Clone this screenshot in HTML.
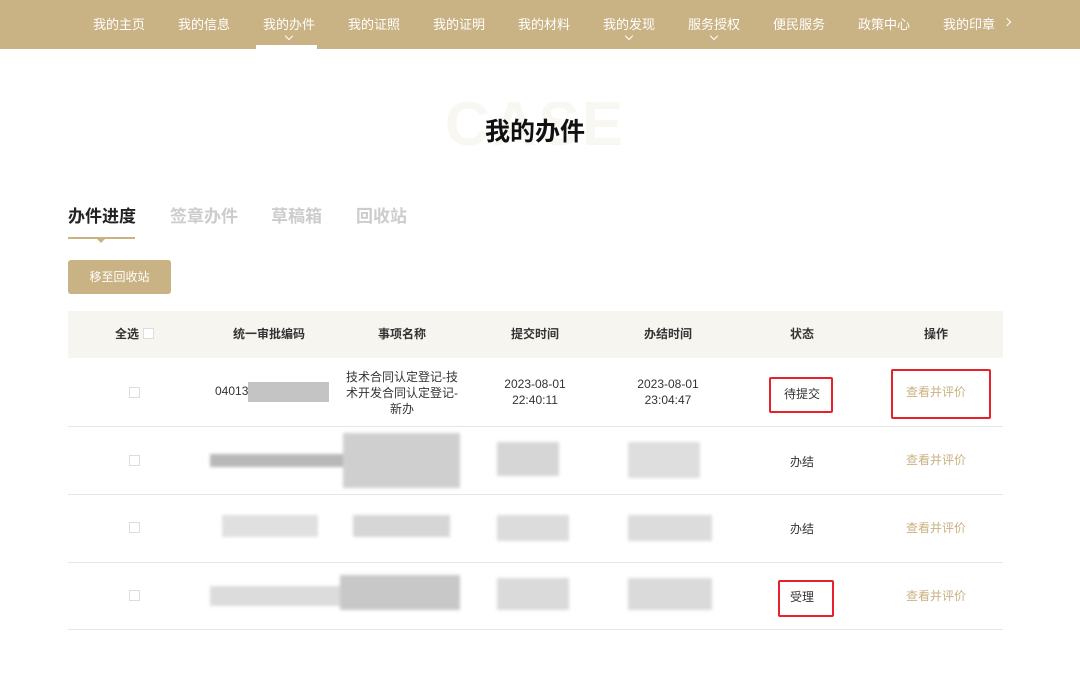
<!DOCTYPE html>
<html><head><meta charset="utf-8"><style>
*{margin:0;padding:0;box-sizing:border-box}
body{width:1080px;height:673px;background:#fff;font-family:"Liberation Sans","Noto Sans CJK SC",sans-serif;position:relative;overflow:hidden;color:#333}
.nav{position:absolute;left:0;top:0;width:1080px;height:49px;background:#c9b283}
.nav span{position:absolute;top:14px;font-size:13px;color:#fff;transform:translateX(-50%);white-space:nowrap}
.chev{position:absolute;width:6px;height:6px;border-right:1px solid #fff;border-bottom:1px solid #fff;transform:rotate(45deg)}
.a{position:absolute}
.c{position:absolute;transform:translateX(-50%);text-align:center;white-space:nowrap}
.line{position:absolute;left:68px;width:935px;height:1px;background:#e6e6e6}
.cb{position:absolute;width:11px;height:11px;border:1px solid #ddd;background:#fff}
.blur{position:absolute;background:#c8c8c8;filter:blur(1.5px)}
.op{color:#c9b283;font-size:12px}
.red{position:absolute;border:2px solid #e5212b;border-radius:2px}
</style></head><body>
<div class="nav">
<span style="left:119px">我的主页</span><span style="left:204px">我的信息</span><span style="left:289px">我的办件</span><span style="left:374px">我的证照</span><span style="left:459px">我的证明</span><span style="left:544px">我的材料</span><span style="left:629px">我的发现</span><span style="left:714px">服务授权</span><span style="left:799px">便民服务</span><span style="left:884px">政策中心</span><span style="left:969px">我的印章</span>
<div class="chev" style="left:286px;top:33px"></div><div class="chev" style="left:626px;top:33px"></div><div class="chev" style="left:711px;top:33px"></div>
<div class="chev" style="left:1004px;top:19px;transform:rotate(-45deg)"></div>
<div class="a" style="left:256px;top:45px;width:61px;height:4px;background:#fff"></div>
</div>
<div class="c" style="left:535px;top:89px;font-size:62px;font-weight:bold;color:#f8f7f2;letter-spacing:2px">CASE</div>
<div class="c" style="left:535px;top:112px;font-size:25px;font-weight:bold;color:#111">我的办件</div>
<div class="a" style="left:68px;top:202px;font-size:17px;font-weight:bold;color:#222">办件进度</div>
<div class="a" style="left:170px;top:202px;font-size:17px;font-weight:bold;color:#ccc">签章办件</div>
<div class="a" style="left:271px;top:202px;font-size:17px;font-weight:bold;color:#ccc">草稿箱</div>
<div class="a" style="left:356px;top:202px;font-size:17px;font-weight:bold;color:#ccc">回收站</div>
<div class="a" style="left:68px;top:237px;width:67px;height:2px;background:#c9b283"></div>
<div class="a" style="left:97px;top:237px;width:0;height:0;border:4px solid transparent;border-top-color:#c9b283;border-bottom:0;transform:translateY(2px)"></div>
<div class="a" style="left:68px;top:260px;width:103px;height:34px;background:#c9b283;border-radius:3px;color:#fff;font-size:12px;text-align:center;line-height:34px">移至回收站</div>
<div class="a" style="left:68px;top:311px;width:935px;height:47px;background:#f7f5ef"></div>
<div class="c" style="left:127px;top:325px;font-size:12px;font-weight:bold">全选</div><div class="cb" style="left:143px;top:328px"></div>
<div class="c" style="left:269px;top:325px;font-size:12px;font-weight:bold">统一审批编码</div>
<div class="c" style="left:402px;top:325px;font-size:12px;font-weight:bold">事项名称</div>
<div class="c" style="left:535px;top:325px;font-size:12px;font-weight:bold">提交时间</div>
<div class="c" style="left:668px;top:325px;font-size:12px;font-weight:bold">办结时间</div>
<div class="c" style="left:802px;top:325px;font-size:12px;font-weight:bold">状态</div>
<div class="c" style="left:936px;top:325px;font-size:12px;font-weight:bold">操作</div>
<div class="line" style="top:426px"></div><div class="line" style="top:494px"></div><div class="line" style="top:562px"></div><div class="line" style="top:629px"></div>
<div class="cb" style="left:129px;top:387px"></div><div class="cb" style="left:129px;top:455px"></div><div class="cb" style="left:129px;top:522px"></div><div class="cb" style="left:129px;top:590px"></div>
<div class="a" style="left:215px;top:384px;font-size:12px">04013</div>
<div class="a" style="left:248px;top:382px;width:81px;height:20px;background:#c4c4c4"></div>
<div class="c" style="left:402px;top:369px;font-size:12px;line-height:16px">技术合同认定登记-技<br>术开发合同认定登记-<br>新办</div>
<div class="c" style="left:535px;top:376px;font-size:12px;line-height:16px">2023-08-01<br>22:40:11</div>
<div class="c" style="left:668px;top:376px;font-size:12px;line-height:16px">2023-08-01<br>23:04:47</div>
<div class="c" style="left:802px;top:385px;font-size:12px">待提交</div>
<div class="red" style="left:769px;top:377px;width:64px;height:36px"></div>
<div class="c op" style="left:936px;top:383px">查看并评价</div>
<div class="red" style="left:891px;top:369px;width:100px;height:50px"></div>
<div class="blur" style="left:210px;top:454px;width:240px;height:13px;background:#b8b8b8"></div>
<div class="blur" style="left:343px;top:433px;width:117px;height:55px;background:#d0cfcf"></div>
<div class="blur" style="left:497px;top:442px;width:62px;height:34px;background:#d6d6d6"></div>
<div class="blur" style="left:628px;top:442px;width:72px;height:36px;background:#dedede"></div>
<div class="c" style="left:802px;top:453px;font-size:12px">办结</div>
<div class="c op" style="left:936px;top:451px">查看并评价</div>
<div class="blur" style="left:222px;top:515px;width:96px;height:22px;background:#e0e0e0"></div>
<div class="blur" style="left:353px;top:515px;width:97px;height:22px;background:#d6d6d6"></div>
<div class="blur" style="left:497px;top:515px;width:72px;height:26px;background:#dcdcdc"></div>
<div class="blur" style="left:628px;top:515px;width:84px;height:26px;background:#dcdcdc"></div>
<div class="c" style="left:802px;top:520px;font-size:12px">办结</div>
<div class="c op" style="left:936px;top:519px">查看并评价</div>
<div class="blur" style="left:210px;top:586px;width:240px;height:20px;background:#dcdcdc"></div>
<div class="blur" style="left:340px;top:575px;width:120px;height:35px;background:#c8c8c8"></div>
<div class="blur" style="left:497px;top:578px;width:72px;height:32px;background:#dadada"></div>
<div class="blur" style="left:628px;top:578px;width:84px;height:32px;background:#dadada"></div>
<div class="c" style="left:802px;top:588px;font-size:12px">受理</div>
<div class="red" style="left:778px;top:580px;width:56px;height:37px"></div>
<div class="c op" style="left:936px;top:587px">查看并评价</div>
</body></html>
